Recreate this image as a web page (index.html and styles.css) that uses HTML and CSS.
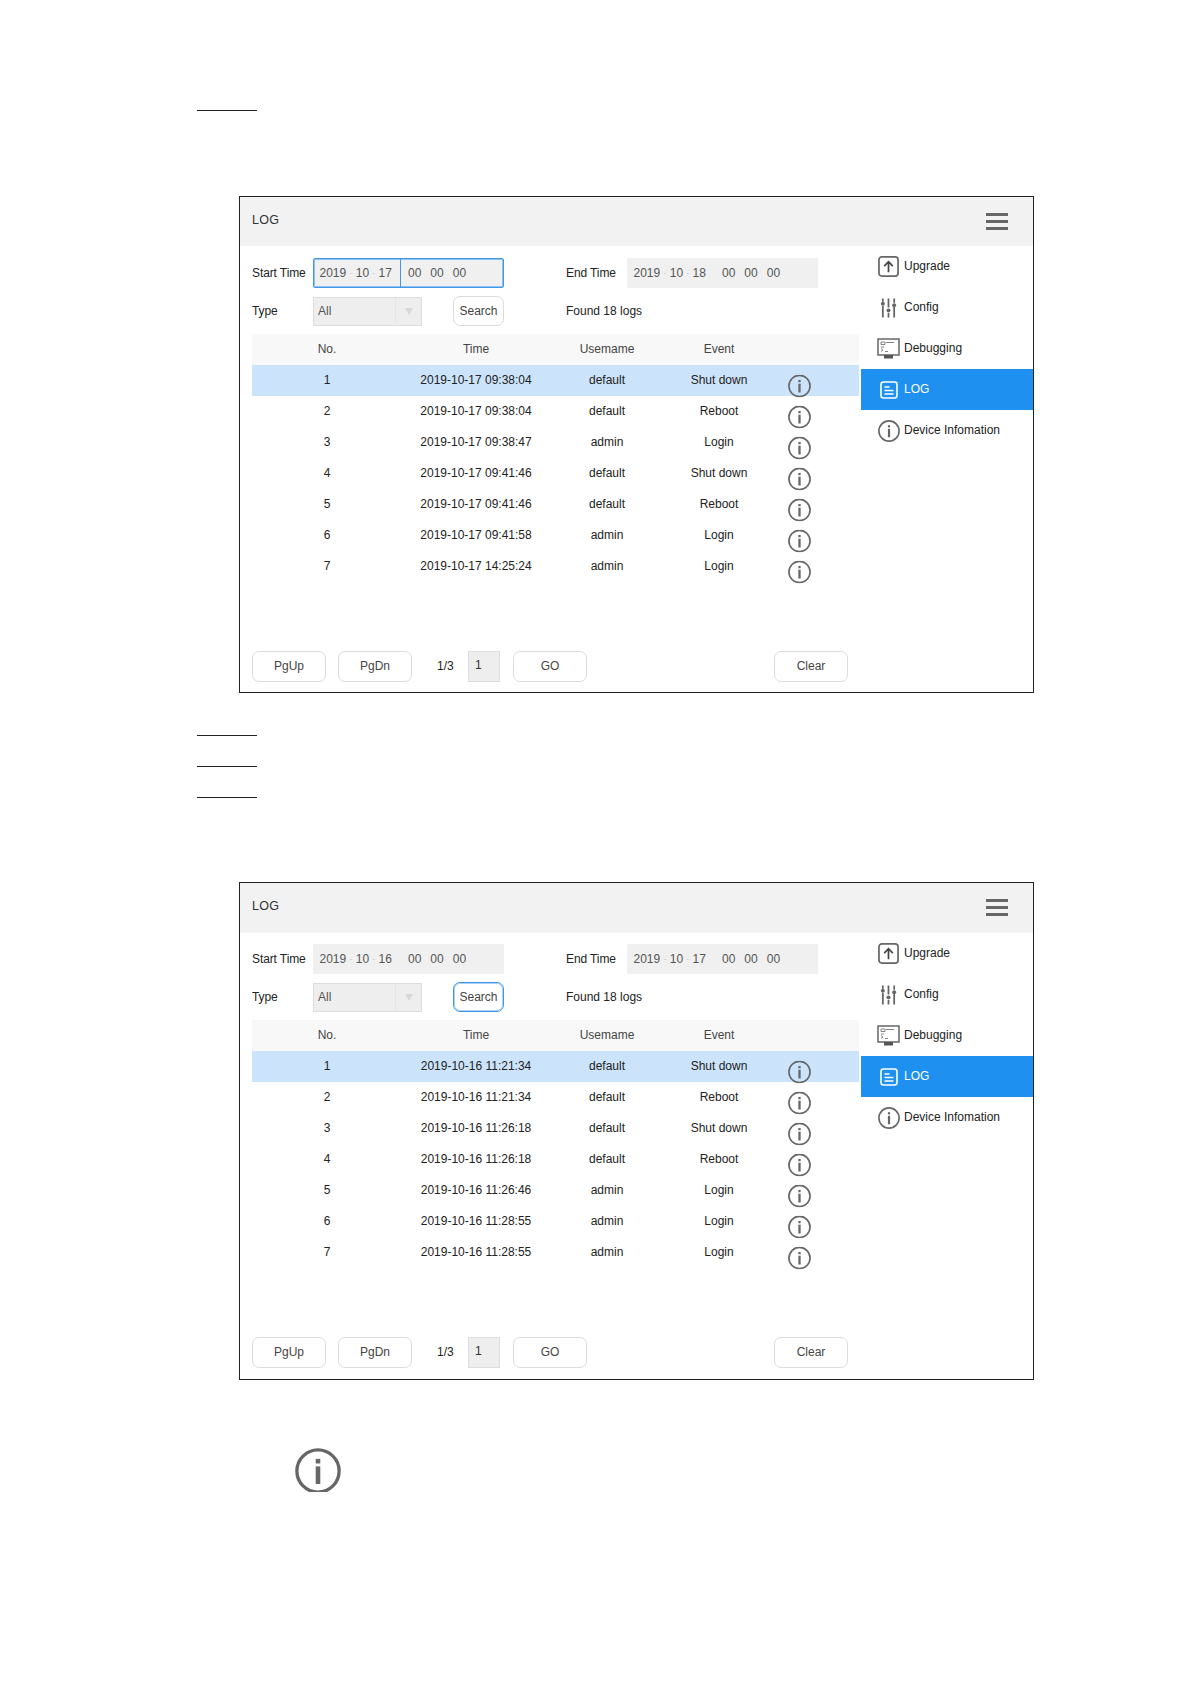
FILE: index.html
```html
<!DOCTYPE html>
<html lang="en">
<head>
<meta charset="utf-8">
<title>LOG</title>
<link rel="stylesheet" href="styles.css">
</head>
<body>
<svg class="defs" width="0" height="0" aria-hidden="true">
  <symbol id="info" viewBox="0 0 22 22">
    <circle cx="11" cy="11" r="10.100" fill="none" stroke="#666" stroke-width="1.600"/>
    <rect x="9.900" y="5.200" width="2.200" height="2.200" fill="#666"/>
    <rect x="9.900" y="8.800" width="2.200" height="8.400" fill="#666"/>
  </symbol>
  <symbol id="upgrade" viewBox="0 0 22 22">
    <rect x="1" y="1" width="20" height="20" rx="3" fill="none" stroke="#666" stroke-width="1.800"/>
    <path d="M11 17V6M6.500 10.500 11 6l4.500 4.500" fill="none" stroke="#444" stroke-width="1.800"/>
  </symbol>
  <symbol id="config" viewBox="0 0 18 22">
    <path d="M3 1v3.500M3 9v12M9 1v9.500M9 16v5M15 1v4.500M15 10v11" fill="none" stroke="#666" stroke-width="1.900"/>
    <circle cx="3" cy="6.500" r="2.100" fill="#666"/><circle cx="9" cy="13.500" r="2.100" fill="#666"/><circle cx="15" cy="8" r="2.100" fill="#666"/>
  </symbol>
  <symbol id="debug" viewBox="0 0 23 21">
    <rect x="1" y="1" width="21" height="16" fill="none" stroke="#666" stroke-width="1.500"/>
    <path d="M4 4h4v2.500H4zM9 4.500h8M4 9h3M4 10.500l2 1.500-2 1.500M8 13.500h3" fill="none" stroke="#777" stroke-width=".9"/>
    <rect x="7" y="17" width="9" height="3.500" fill="#555"/>
  </symbol>
  <symbol id="log" viewBox="0 0 18 18">
    <rect x="1" y="1" width="16" height="16" rx="2.500" fill="none" stroke="#fff" stroke-width="1.600"/>
    <path d="M4.500 6h5M4.500 9.500h9M4.500 13h9" fill="none" stroke="#fff" stroke-width="1.400"/>
  </symbol>
</svg>

<hr class="rule rule-first">

<section class="panel">
  <header class="panel-head"><span>LOG</span><span class="burger"><i></i><i></i><i></i></span></header>
  <div class="panel-body">
    <div class="main">
      <div class="form-row">
        <span class="label">Start Time</span>
        <div class="dt dt-focus">
          <span class="dt-date"><b>2019</b><em>-</em><b>10</b><em>-</em><b>17</b></span>
          <span class="dt-time"><b>00</b><b>00</b><b>00</b></span>
        </div>
        <span class="label label-end">End Time</span>
        <div class="dt">
          <span class="dt-date"><b>2019</b><em>-</em><b>10</b><em>-</em><b>18</b></span>
          <span class="dt-time"><b>00</b><b>00</b><b>00</b></span>
        </div>
      </div>
      <div class="form-row form-row-two">
        <span class="label">Type</span>
        <div class="select"><span class="select-val">All</span><span class="select-arrow"></span></div>
        <button class="btn btn-search">Search</button>
        <span class="found">Found 18 logs</span>
      </div>
      <div class="table">
        <div class="row row-head"><span>No.</span><span>Time</span><span>Usemame</span><span>Event</span></div>
        <div class="row row-sel"><span>1</span><span>2019-10-17 09:38:04</span><span>default</span><span>Shut down</span><svg class="row-icon"><use href="#info"/></svg></div>
        <div class="row"><span>2</span><span>2019-10-17 09:38:04</span><span>default</span><span>Reboot</span><svg class="row-icon"><use href="#info"/></svg></div>
        <div class="row"><span>3</span><span>2019-10-17 09:38:47</span><span>admin</span><span>Login</span><svg class="row-icon"><use href="#info"/></svg></div>
        <div class="row"><span>4</span><span>2019-10-17 09:41:46</span><span>default</span><span>Shut down</span><svg class="row-icon"><use href="#info"/></svg></div>
        <div class="row"><span>5</span><span>2019-10-17 09:41:46</span><span>default</span><span>Reboot</span><svg class="row-icon"><use href="#info"/></svg></div>
        <div class="row"><span>6</span><span>2019-10-17 09:41:58</span><span>admin</span><span>Login</span><svg class="row-icon"><use href="#info"/></svg></div>
        <div class="row"><span>7</span><span>2019-10-17 14:25:24</span><span>admin</span><span>Login</span><svg class="row-icon"><use href="#info"/></svg></div>
      </div>
      <div class="pager">
        <button class="btn btn-page">PgUp</button>
        <button class="btn btn-page">PgDn</button>
        <span class="page-count">1/3</span>
        <span class="page-input">1</span>
        <button class="btn btn-page">GO</button>
        <button class="btn btn-page btn-clear">Clear</button>
      </div>
    </div>
    <nav class="side">
      <a class="side-item"><span class="side-icon"><svg class="ic-upgrade"><use href="#upgrade"/></svg></span>Upgrade</a>
      <a class="side-item"><span class="side-icon"><svg class="ic-config"><use href="#config"/></svg></span>Config</a>
      <a class="side-item"><span class="side-icon"><svg class="ic-debug"><use href="#debug"/></svg></span>Debugging</a>
      <a class="side-item side-active"><span class="side-icon"><svg class="ic-log"><use href="#log"/></svg></span>LOG</a>
      <a class="side-item"><span class="side-icon"><svg class="ic-info"><use href="#info"/></svg></span>Device Infomation</a>
    </nav>
  </div>
</section>

<hr class="rule rule-a">
<hr class="rule rule-b">
<hr class="rule rule-b">

<section class="panel panel-two">
  <header class="panel-head"><span>LOG</span><span class="burger"><i></i><i></i><i></i></span></header>
  <div class="panel-body">
    <div class="main">
      <div class="form-row">
        <span class="label">Start Time</span>
        <div class="dt dt-wide">
          <span class="dt-date"><b>2019</b><em>-</em><b>10</b><em>-</em><b>16</b></span>
          <span class="dt-time"><b>00</b><b>00</b><b>00</b></span>
        </div>
        <span class="label label-end">End Time</span>
        <div class="dt">
          <span class="dt-date"><b>2019</b><em>-</em><b>10</b><em>-</em><b>17</b></span>
          <span class="dt-time"><b>00</b><b>00</b><b>00</b></span>
        </div>
      </div>
      <div class="form-row form-row-two">
        <span class="label">Type</span>
        <div class="select"><span class="select-val">All</span><span class="select-arrow"></span></div>
        <button class="btn btn-search btn-focus">Search</button>
        <span class="found">Found 18 logs</span>
      </div>
      <div class="table">
        <div class="row row-head"><span>No.</span><span>Time</span><span>Usemame</span><span>Event</span></div>
        <div class="row row-sel"><span>1</span><span>2019-10-16 11:21:34</span><span>default</span><span>Shut down</span><svg class="row-icon"><use href="#info"/></svg></div>
        <div class="row"><span>2</span><span>2019-10-16 11:21:34</span><span>default</span><span>Reboot</span><svg class="row-icon"><use href="#info"/></svg></div>
        <div class="row"><span>3</span><span>2019-10-16 11:26:18</span><span>default</span><span>Shut down</span><svg class="row-icon"><use href="#info"/></svg></div>
        <div class="row"><span>4</span><span>2019-10-16 11:26:18</span><span>default</span><span>Reboot</span><svg class="row-icon"><use href="#info"/></svg></div>
        <div class="row"><span>5</span><span>2019-10-16 11:26:46</span><span>admin</span><span>Login</span><svg class="row-icon"><use href="#info"/></svg></div>
        <div class="row"><span>6</span><span>2019-10-16 11:28:55</span><span>admin</span><span>Login</span><svg class="row-icon"><use href="#info"/></svg></div>
        <div class="row"><span>7</span><span>2019-10-16 11:28:55</span><span>admin</span><span>Login</span><svg class="row-icon"><use href="#info"/></svg></div>
      </div>
      <div class="pager">
        <button class="btn btn-page">PgUp</button>
        <button class="btn btn-page">PgDn</button>
        <span class="page-count">1/3</span>
        <span class="page-input">1</span>
        <button class="btn btn-page">GO</button>
        <button class="btn btn-page btn-clear">Clear</button>
      </div>
    </div>
    <nav class="side">
      <a class="side-item"><span class="side-icon"><svg class="ic-upgrade"><use href="#upgrade"/></svg></span>Upgrade</a>
      <a class="side-item"><span class="side-icon"><svg class="ic-config"><use href="#config"/></svg></span>Config</a>
      <a class="side-item"><span class="side-icon"><svg class="ic-debug"><use href="#debug"/></svg></span>Debugging</a>
      <a class="side-item side-active"><span class="side-icon"><svg class="ic-log"><use href="#log"/></svg></span>LOG</a>
      <a class="side-item"><span class="side-icon"><svg class="ic-info"><use href="#info"/></svg></span>Device Infomation</a>
    </nav>
  </div>
</section>

<div class="note-icon"><svg class="note-svg"><use href="#info"/></svg></div>
</body>
</html>
```
FILE: styles.css
```css
html, body { margin: 0; padding: 0; background: #fff; }
body {
  font-family: "Liberation Sans", Arial, sans-serif;
  font-size: 12px;
  color: #333;
  height: 1684px;
  overflow: hidden;
}
.defs { position: absolute; }

.rule { display: block; border: 0; height: 1px; background: #222; width: 60px; margin: 0 0 0 197px; }
.rule-first { margin-top: 110px; }
.rule-a { margin-top: 42px; }
.rule-b { margin-top: 30px; }

.panel {
  box-sizing: border-box;
  width: 795px;
  height: 497px;
  margin: 85px 0 0 239px;
  border: 1px solid #222;
  display: flex;
  flex-direction: column;
}
.panel-two { margin-top: 84px; height: 498px; }
.panel-head {
  height: 49px;
  flex: none;
  background: #f2f2f2;
  display: flex;
  justify-content: space-between;
  padding: 16px 25px 0 12px;
  box-sizing: border-box;
  font-size: 12.5px;
  letter-spacing: .3px;
}
.panel-two .panel-head { height: 50px; }
.burger { display: flex; flex-direction: column; gap: 4px; width: 22px; }
.burger i { display: block; height: 3px; background: #666; }

.panel-body { flex: 1; display: flex; min-height: 0; }
.main {
  width: 621px;
  box-sizing: border-box;
  padding: 12px 0 10px 12px;
  display: flex;
  flex-direction: column;
}
.panel-two .main { padding-top: 11px; padding-bottom: 11px; }
.form-row { display: flex; align-items: center; height: 30px; }
.form-row-two { margin-top: 8px; height: 30px; }
.label { width: 61px; color: #222; letter-spacing: -.1px; }
.label-end { width: 61px; margin-left: 62px; }

.dt {
  box-sizing: border-box;
  width: 191px;
  height: 30px;
  background: #f0f0f0;
  display: flex;
  align-items: center;
  border: 1px solid #f0f0f0;
  color: #555;
}
.dt-focus { border-color: #3f97e6; border-radius: 2px; box-shadow: inset 0 0 0 1px #8ec2f0; }
.dt b { font-weight: 400; }
.dt em { font-style: normal; color: #ccc; width: 9.5px; text-align: center; font-size: 9px; }
.dt-date { display: flex; align-items: center; box-sizing: border-box; width: 87px; height: 100%; padding-left: 5.5px; border-right: 1px solid transparent; }
.dt-focus .dt-date { border-right-color: #3f97e6; }
.dt-time { display: flex; gap: 9px; padding-left: 7px; }

.select {
  box-sizing: border-box;
  width: 109px;
  height: 29px;
  background: #eee;
  border: 1px solid #ddd;
  display: flex;
  align-items: center;
  color: #555;
}
.select-val { flex: 1; padding-left: 4px; }
.select-arrow {
  width: 26px;
  height: 100%;
  border-left: 1px solid #e6e6e6;
  box-sizing: border-box;
  display: flex;
  align-items: center;
  justify-content: center;
}
.select-arrow::after {
  content: "";
  border-left: 4px solid transparent;
  border-right: 4px solid transparent;
  border-top: 7px solid #d8d8d8;
}
.btn {
  font: inherit;
  color: #444;
  background: #fff;
  border: 1px solid #dcdcdc;
  border-radius: 7px;
  padding: 0 0 1px;
  box-sizing: border-box;
}
.btn-search { width: 51px; height: 30px; margin-left: 31px; }
.btn-focus { border-color: #3f97e6; box-shadow: inset 0 0 0 1px #a9d2f5; }
.found { margin-left: 62px; color: #222; }

.table { margin-top: 8px; width: 607px; }
.row {
  display: grid;
  grid-template-columns: 150px 148px 114px 110px 50px 35px;
  box-sizing: border-box;
  height: 31px;
  padding-bottom: 2px;
  align-items: center;
  text-align: center;
  color: #222;
}
.row-head { background: #f8f8f8; color: #444; padding-bottom: 1px; }
.row-sel { background: #cce4fb; }
.row-icon { width: 23px; height: 23px; justify-self: center; transform: translateY(6.5px); }

.pager { margin-top: auto; display: flex; align-items: center; height: 31px; }
.btn-page { width: 74px; height: 31px; }
.btn-page + .btn-page { margin-left: 12px; }
.page-count { margin-left: 25px; width: 31px; color: #222; padding-bottom: 1px; }
.page-input {
  box-sizing: border-box;
  width: 32px;
  height: 31px;
  line-height: 27px;
  background: #eee;
  border: 1px solid #ddd;
  padding-left: 6px;
  margin-right: 13px;
}
.btn-clear { margin-left: 187px !important; }

.side { flex: 1; display: flex; flex-direction: column; }
.side-item { height: 41px; display: flex; align-items: center; color: #222; padding-bottom: 2px; box-sizing: border-box; }
.side-icon { width: 43px; flex: none; display: flex; justify-content: center; padding-left: 12px; box-sizing: border-box; padding-top: 2px; }
.side-active { background: #1e90f0; color: #fff; }
.ic-upgrade { width: 21px; height: 21px; flex: none; }
.ic-config { width: 17px; height: 22px; flex: none; }
.ic-debug { width: 23px; height: 21px; flex: none; }
.ic-log { width: 18px; height: 18px; flex: none; }
.ic-info { width: 22px; height: 22px; flex: none; }

.note-icon { margin: 68px 0 0 295px; height: 44px; overflow: hidden; }
.note-svg { width: 46px; height: 46px; display: block; }
```
